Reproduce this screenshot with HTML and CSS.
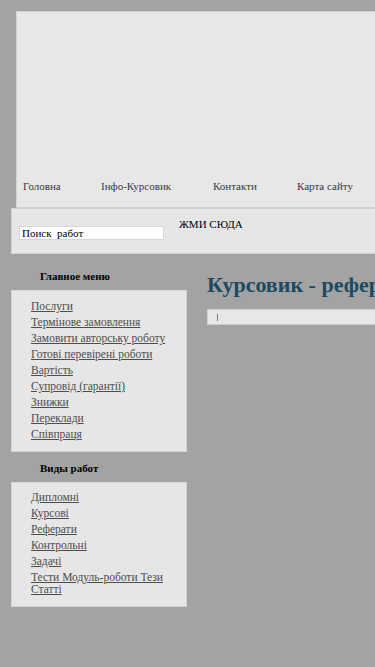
FILE: index.html
```html
<!DOCTYPE html>
<html lang="uk">
<head>
<meta charset="utf-8">
<title>Курсовик</title>
<link rel="stylesheet" href="styles.css">
</head>
<body>
<div class="page">
  <header class="header">
    <nav class="topnav">
      <a class="nav-link nav-home" href="#">Головна</a>
      <a class="nav-link nav-info" href="#">Інфо-Курсовик</a>
      <a class="nav-link nav-contacts" href="#">Контакти</a>
      <a class="nav-link nav-map" href="#">Карта сайту</a>
    </nav>
  </header>
  <div class="searchbar">
    <div class="search-input">Поиск&nbsp; работ</div>
    <a class="press-here" href="#">ЖМИ СЮДА</a>
  </div>
  <div class="columns">
    <aside class="sidebar">
      <h3 class="side-title">Главное меню</h3>
      <ul class="side-box">
        <li><a href="#">Послуги</a></li>
        <li><a href="#">Термінове замовлення</a></li>
        <li><a href="#">Замовити авторську роботу</a></li>
        <li><a href="#">Готові перевірені роботи</a></li>
        <li><a href="#">Вартість</a></li>
        <li><a href="#">Супровід (гарантії)</a></li>
        <li><a href="#">Знижки</a></li>
        <li><a href="#">Переклади</a></li>
        <li><a href="#">Співпраця</a></li>
      </ul>
      <h3 class="side-title side-title-2">Виды работ</h3>
      <ul class="side-box side-box-2">
        <li><a href="#">Дипломні</a></li>
        <li><a href="#">Курсові</a></li>
        <li><a href="#">Реферати</a></li>
        <li><a href="#">Контрольні</a></li>
        <li><a href="#">Задачі</a></li>
        <li class="wide"><a href="#">Тести Модуль-роботи Тези Статті</a></li>
      </ul>
    </aside>
    <main class="main">
      <h1 class="main-title">Курсовик - реферат, курсова, дипломна робота на замовлення</h1>
      <div class="crumbs"><span class="crumb-mark"></span></div>
    </main>
  </div>
</div>
</body>
</html>
```
FILE: styles.css
```css
html, body {
  margin: 0;
  padding: 0;
}
body {
  background: #a3a3a3;
  font-family: "Liberation Serif", "Times New Roman", serif;
  overflow-x: hidden;
}
.page {
  width: 1000px;
  padding-top: 11px;
}
.header {
  margin-left: 16px;
  height: 195px;
  background: #e7e7e7;
  border: 1px solid #d2d2d2;
  display: flex;
  align-items: flex-end;
}
.topnav {
  display: flex;
  padding-bottom: 15px;
  padding-left: 6px;
}
.nav-link {
  color: #333b40;
  text-decoration: none;
  font-size: 11px;
}
.nav-home { width: 78px; }
.nav-info { width: 112px; }
.nav-contacts { width: 84px; }
.searchbar {
  margin-left: 11px;
  height: 44px;
  background: #e6e6e6;
  border: 1px solid #d2d2d2;
  display: flex;
  align-items: flex-start;
}
.search-input {
  margin: 17px 0 0 7px;
  width: 141px;
  height: 12px;
  background: #fff;
  border: 1px solid #d6d6d6;
  font-size: 11px;
  line-height: 12px;
  padding-left: 2px;
  color: #000;
}
.press-here {
  margin: 9px 0 0 15px;
  font-size: 11px;
  color: #000;
  text-decoration: none;
}
.columns {
  display: flex;
  align-items: flex-start;
  margin-left: 11px;
}
.sidebar {
  width: 176px;
  flex: none;
}
.side-title {
  margin: 16px 0 0 0;
  padding-left: 29px;
  font-size: 11px;
  font-weight: bold;
  line-height: 13px;
  height: 20px;
  color: #000;
}
.side-title-2 {
  margin-top: 10px;
}
.side-box {
  list-style: none;
  margin: 0;
  padding: 7px 0 9px 19px;
  background: #e6e6e6;
  border: 1px solid #d4d4d4;
}
.side-box-2 {
  padding-top: 6px;
  padding-bottom: 11px;
}
.side-box li {
  font-size: 11.5px;
  line-height: 16px;
}
.side-box li.wide {
  line-height: 12px;
  padding-top: 2px;
  width: 140px;
}
.side-box a {
  color: #4d4d4d;
  text-decoration: underline;
}
.main {
  margin-left: 20px;
  flex: 1;
}
.main-title {
  margin: 18px 0 0 0;
  font-size: 22px;
  line-height: 26px;
  font-weight: bold;
  color: #1d4a60;
  white-space: nowrap;
}
.crumbs {
  margin-top: 11px;
  height: 14px;
  background: #e7e7e7;
  border: 1px solid #cfcfcf;
  padding-left: 9px;
  display: flex;
  align-items: center;
}
.crumb-mark {
  width: 1px;
  height: 7px;
  background: #6f7f8a;
}
```
